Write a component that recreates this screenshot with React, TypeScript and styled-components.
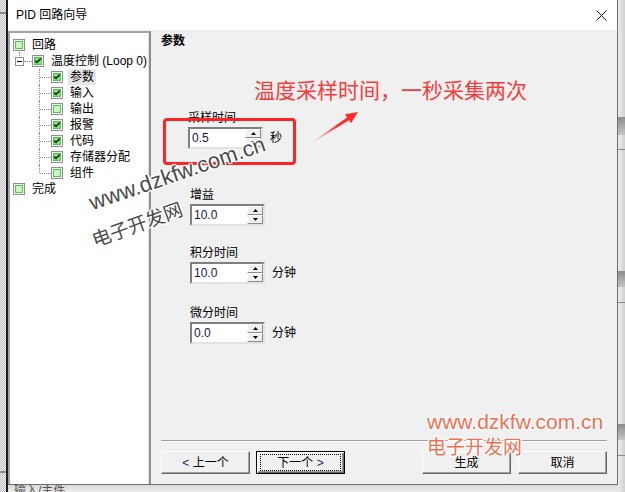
import React from "react";
import styled, { createGlobalStyle, css } from "styled-components";

const GlobalStyle = createGlobalStyle`
  html, body { margin: 0; padding: 0; background: #e6e6e6; }
  body {
    font-family: "Liberation Sans", "Noto Sans CJK SC", sans-serif;
    font-size: 12px;
    color: #000;
  }
  #root { width: 625px; height: 492px; overflow: hidden; }
`;

const Page = styled.div`
  position: relative;
  width: 625px;
  height: 492px;
  display: flex;
  overflow: hidden;
  background: #e6e6e6;
`;

const LeftEdge = styled.div`
  width: 8px;
  flex-shrink: 0;
  background:
    linear-gradient(to right, transparent 6px, #1e1e1e 6px),
    linear-gradient(
      to bottom,
      transparent 12px, #8a8a8a 12px, #8a8a8a 14px, transparent 14px,
      transparent 471px, #8a8a8a 471px, #8a8a8a 473px, transparent 473px
    ),
    repeating-conic-gradient(#bcbcbc 0 25%, #f3f3f3 0 50%) 0 0 / 2px 2px;
`;

const RightEdge = styled.div`
  flex: 1;
  background:
    linear-gradient(to bottom,
      transparent 117px, #8d8d8d 117px, #c4c4c4 135px, transparent 135px,
      transparent 149px, #8a8a8a 149px, #8a8a8a 150px, transparent 150px,
      transparent 271px, #8d8d8d 271px, #c4c4c4 287px, transparent 287px,
      transparent 302px, #8a8a8a 302px, #8a8a8a 303px, transparent 303px,
      transparent 424px, #8d8d8d 424px, #c4c4c4 440px, transparent 440px,
      transparent 455px, #8a8a8a 455px, #8a8a8a 456px, transparent 456px),
    linear-gradient(to right, #ececec, #d0d0d0);
`;

const Center = styled.div`
  width: 610px;
  flex-shrink: 0;
  display: flex;
  flex-direction: column;
`;

const Dialog = styled.div`
  height: 485px;
  box-sizing: border-box;
  border-right: 1px solid #6e6e6e;
  border-bottom: 1px solid #6e6e6e;
  background: #f0f0f0;
  display: flex;
  flex-direction: column;
`;

const BottomPeek = styled.div`
  flex: 1;
  overflow: hidden;
  background: linear-gradient(to bottom, #d9d9d9, #ececec);
  padding-left: 6px;
  font-size: 12px;
  line-height: 12px;
  color: #555;
  white-space: nowrap;
`;

const TitleBar = styled.div`
  height: 30px;
  flex-shrink: 0;
  background: #fff;
  display: flex;
  align-items: center;
  justify-content: space-between;
  padding: 0 10px 0 8px;
`;

const Title = styled.span`
  font-size: 12px;
  line-height: 14px;
  color: #000;
`;

const Body = styled.div`
  flex: 1;
  min-height: 0;
  display: flex;
`;

const TreePanel = styled.div`
  width: 143px;
  flex-shrink: 0;
  box-sizing: border-box;
  margin-top: 1px;
  padding-top: 4px;
  background: #fff;
  border-top: 2px solid #a3a3a3;
  border-left: 2px solid #a3a3a3;
  border-right: 2px solid #8e8e8e;
  box-shadow: inset -1px 0 #e3e3e3;
`;

const Row = styled.div<{ $indent: number }>`
  height: 16px;
  display: flex;
  align-items: center;
  padding-left: ${(p) => p.$indent}px;
`;

const Expander = styled.span`
  position: relative;
  width: 9px;
  height: 9px;
  box-sizing: border-box;
  border: 1px solid #919191;
  background: #fff;
  flex-shrink: 0;
  &::before {
    content: "";
    position: absolute;
    left: 3px;
    top: -6px;
    height: 4px;
    border-left: 1px dotted #8a8a8a;
  }
  &::after {
    content: "";
    position: absolute;
    left: 1px;
    top: 3px;
    width: 5px;
    height: 1px;
    background: #000;
  }
`;

const HLine = styled.span`
  width: 8px;
  border-top: 1px dotted #8a8a8a;
  flex-shrink: 0;
`;

const Connector = styled.span<{ $last?: boolean }>`
  position: relative;
  width: 12px;
  align-self: stretch;
  flex-shrink: 0;
  &::before {
    content: "";
    position: absolute;
    left: 0;
    top: 0;
    height: ${(p) => (p.$last ? "8px" : "16px")};
    border-left: 1px dotted #8a8a8a;
  }
  &::after {
    content: "";
    position: absolute;
    left: 1px;
    right: 0;
    top: 8px;
    border-top: 1px dotted #8a8a8a;
  }
`;

const TreeLabel = styled.span<{ $selected?: boolean }>`
  margin-left: 5px;
  padding: 0 2px;
  line-height: 16px;
  white-space: nowrap;
  ${(p) =>
    p.$selected &&
    css`
      background: #e6e6e6;
    `}
`;

const ContentPanel = styled.div`
  flex: 1;
  display: flex;
  flex-direction: column;
  padding: 4px 10px 10px 10px;
`;

const Heading = styled.div`
  font-weight: bold;
  font-size: 12px;
  line-height: 14px;
`;

const Field = styled.div<{ $mt: number; $ml: number }>`
  margin-top: ${(p) => p.$mt}px;
  margin-left: ${(p) => p.$ml}px;
  display: flex;
  flex-direction: column;
  align-items: flex-start;
`;

const FieldLabel = styled.div`
  line-height: 15px;
  margin-bottom: 1px;
`;

const FieldRow = styled.div`
  display: flex;
  align-items: center;
`;

const SpinBox = styled.div`
  display: flex;
  width: 75px;
  height: 22px;
  box-sizing: border-box;
  border-style: solid;
  border-width: 2px;
  border-color: #7f7f7f #e3e3e3 #e3e3e3 #7f7f7f;
  background: #fff;
`;

const SpinValue = styled.div`
  flex: 1;
  padding-left: 2px;
  line-height: 18px;
  font-size: 12px;
  color: #15154a;
`;

const SpinButtons = styled.div`
  width: 16px;
  display: flex;
  flex-direction: column;
`;

const SpinBtn = styled.div`
  flex: 1;
  box-sizing: border-box;
  background: #f0f0f0;
  border: 1px solid;
  border-color: #fff #8c8c8c #8c8c8c #fff;
  display: flex;
  align-items: center;
  justify-content: center;
`;

const Unit = styled.span`
  margin-left: 7px;
  line-height: 16px;
`;

const Spacer = styled.div`
  flex: 1;
`;

const Separator = styled.div`
  height: 1px;
  background: #a0a0a0;
  box-shadow: 0 1px #fff;
`;

const ButtonRow = styled.div`
  margin-top: 10px;
  display: flex;
  justify-content: space-between;
`;

const ButtonGroup = styled.div<{ $gap: number }>`
  display: flex;
  gap: ${(p) => p.$gap}px;
`;

const Btn = styled.button<{ $default?: boolean }>`
  position: relative;
  width: 89px;
  height: 23px;
  box-sizing: border-box;
  padding: 0;
  background: #f0f0f0;
  font-family: "Liberation Sans", "Noto Sans CJK SC", sans-serif;
  font-size: 12px;
  line-height: 14px;
  color: #000;
  border: 1px solid;
  border-color: #fff #696969 #696969 #fff;
  box-shadow: inset -1px -1px #a0a0a0;
  ${(p) =>
    p.$default &&
    css`
      border: 1px solid #000;
      box-shadow: inset 1px 1px #fff, inset -1px -1px #696969, inset -2px -2px #a0a0a0;
      &::after {
        content: "";
        position: absolute;
        left: 3px;
        right: 3px;
        top: 2px;
        bottom: 2px;
        border: 1px dotted #000;
      }
    `}
`;

const Chevron = styled.span`
  color: #1c1c6c;
`;

/* ---------- overlays ---------- */

const Annotation = styled.div`
  position: absolute;
  left: 254px;
  top: 79px;
  font-family: "Noto Sans CJK SC", sans-serif;
  font-size: 21px;
  line-height: 21px;
  color: #f43c3c;
  white-space: nowrap;
`;

const RedBox = styled.div`
  position: absolute;
  left: 163px;
  top: 118px;
  width: 133px;
  height: 47px;
  box-sizing: border-box;
  border: 3px solid #ff2424;
  border-radius: 4px;
`;

const ArrowSvg = styled.svg`
  position: absolute;
  left: 305px;
  top: 105px;
`;

const halo = css`
  text-shadow: 1px 0 #fff, -1px 0 #fff, 0 1px #fff, 0 -1px #fff, 1px 1px #fff,
    -1px -1px #fff, 1px -1px #fff, -1px 1px #fff, 0 0 3px #fff;
`;

const WatermarkDark = styled.div<{ $size: number; $angle: number }>`
  position: absolute;
  white-space: nowrap;
  font-family: "Liberation Sans", "Noto Sans CJK SC", sans-serif;
  font-size: ${(p) => p.$size}px;
  line-height: 24px;
  color: #4a4a4a;
  transform-origin: 0 100%;
  transform: rotate(${(p) => p.$angle}deg);
  ${halo}
`;

const WatermarkOrange = styled.div<{ $size: number }>`
  position: absolute;
  left: 427px;
  white-space: nowrap;
  font-family: "Liberation Sans", "Noto Sans CJK SC", sans-serif;
  font-size: ${(p) => p.$size}px;
  line-height: 24px;
  color: #ef7050;
  ${halo}
`;

/* ---------- icons ---------- */

function CheckIcon({ checked }: { checked: boolean }) {
  return (
    <svg width="12" height="12" viewBox="0 0 12 12" style={{ flexShrink: 0, display: "block" }}>
      <rect x="0.5" y="0.5" width="11" height="11" fill="#fff" stroke="#8f8f8f" />
      <rect x="2" y="2" width="8" height="8" fill="#4cc84c" />
      <rect x="3" y="3" width="6" height="6" fill={checked ? "#86e27c" : "#c7f6bf"} />
      {checked && (
        <path d="M3.2 5.6 L5 7.4 L8.8 3.6" stroke="#0e3e12" strokeWidth="1.7" fill="none" />
      )}
    </svg>
  );
}

function CloseIcon() {
  return (
    <svg width="11" height="11" viewBox="0 0 11 11" style={{ display: "block" }}>
      <path d="M0.5 0.5 L10.5 10.5 M10.5 0.5 L0.5 10.5" stroke="#111" strokeWidth="1" />
    </svg>
  );
}

function Tri({ up }: { up: boolean }) {
  return (
    <svg width="5" height="3" viewBox="0 0 5 3" style={{ display: "block" }}>
      <path d={up ? "M2.5 0 L5 3 L0 3 Z" : "M0 0 L5 0 L2.5 3 Z"} fill="#000" />
    </svg>
  );
}

function Spin({ value }: { value: string }) {
  return (
    <SpinBox>
      <SpinValue>{value}</SpinValue>
      <SpinButtons>
        <SpinBtn>
          <Tri up />
        </SpinBtn>
        <SpinBtn>
          <Tri up={false} />
        </SpinBtn>
      </SpinButtons>
    </SpinBox>
  );
}

type Node = { level: 0 | 1 | 2; label: string; checked: boolean; selected?: boolean; last?: boolean };

const nodes: Node[] = [
  { level: 0, label: "回路", checked: false },
  { level: 1, label: "温度控制 (Loop 0)", checked: true },
  { level: 2, label: "参数", checked: true, selected: true },
  { level: 2, label: "输入", checked: true },
  { level: 2, label: "输出", checked: false },
  { level: 2, label: "报警", checked: true },
  { level: 2, label: "代码", checked: true },
  { level: 2, label: "存储器分配", checked: true },
  { level: 2, label: "组件", checked: false, last: true },
  { level: 0, label: "完成", checked: false },
];

const indents = { 0: 3, 1: 5, 2: 29 };

const fields = [
  { label: "采样时间", value: "0.5", unit: "秒", mt: 63, ml: 27 },
  { label: "增益", value: "10.0", unit: "", mt: 39, ml: 29 },
  { label: "积分时间", value: "10.0", unit: "分钟", mt: 20, ml: 29 },
  { label: "微分时间", value: "0.0", unit: "分钟", mt: 22, ml: 29 },
];

export default function App() {
  return (
    <>
      <GlobalStyle />
      <Page>
        <LeftEdge />
        <Center>
          <Dialog>
            <TitleBar>
              <Title>PID 回路向导</Title>
              <CloseIcon />
            </TitleBar>
            <Body>
              <TreePanel>
                {nodes.map((n, i) => (
                  <Row key={i} $indent={indents[n.level]}>
                    {n.level === 1 && (
                      <>
                        <Expander />
                        <HLine />
                      </>
                    )}
                    {n.level === 2 && <Connector $last={n.last} />}
                    <CheckIcon checked={n.checked} />
                    <TreeLabel $selected={n.selected}>{n.label}</TreeLabel>
                  </Row>
                ))}
              </TreePanel>
              <ContentPanel>
                <Heading>参数</Heading>
                {fields.map((f) => (
                  <Field key={f.label} $mt={f.mt} $ml={f.ml}>
                    <FieldLabel>{f.label}</FieldLabel>
                    <FieldRow>
                      <Spin value={f.value} />
                      {f.unit && <Unit>{f.unit}</Unit>}
                    </FieldRow>
                  </Field>
                ))}
                <Spacer />
                <Separator />
                <ButtonRow>
                  <ButtonGroup $gap={6}>
                    <Btn>
                      <Chevron>&lt;</Chevron> 上一个
                    </Btn>
                    <Btn $default>
                      下一个 <Chevron>&gt;</Chevron>
                    </Btn>
                  </ButtonGroup>
                  <ButtonGroup $gap={7}>
                    <Btn>生成</Btn>
                    <Btn>取消</Btn>
                  </ButtonGroup>
                </ButtonRow>
              </ContentPanel>
            </Body>
          </Dialog>
          <BottomPeek>输入/主件</BottomPeek>
        </Center>
        <RightEdge />

        <Annotation>温度采样时间，一秒采集两次</Annotation>
        <RedBox />
        <ArrowSvg width="60" height="45" viewBox="0 0 60 45">
          <defs>
            <linearGradient id="shaft" gradientUnits="userSpaceOnUse" x1="8" y1="37" x2="44" y2="14">
              <stop offset="0" stopColor="#ff2a2a" stopOpacity="0" />
              <stop offset="0.7" stopColor="#ff2a2a" stopOpacity="1" />
            </linearGradient>
          </defs>
          <polygon points="8.2,37.2 7.8,36.8 42.4,12.3 44.3,15.1" fill="url(#shaft)" />
          <polygon points="53,7 46,18.3 40,9.3" fill="#ff2a2a" />
        </ArrowSvg>

        <WatermarkDark $size={22} $angle={-19} style={{ left: 94, top: 191 }}>
          www.dzkfw.com.cn
        </WatermarkDark>
        <WatermarkDark $size={19} $angle={-20} style={{ left: 97, top: 229 }}>
          电子开发网
        </WatermarkDark>

        <WatermarkOrange $size={21} style={{ top: 410 }}>
          www.dzkfw.com.cn
        </WatermarkOrange>
        <WatermarkOrange $size={19} style={{ top: 436 }}>
          电子开发网
        </WatermarkOrange>
      </Page>
    </>
  );
}
